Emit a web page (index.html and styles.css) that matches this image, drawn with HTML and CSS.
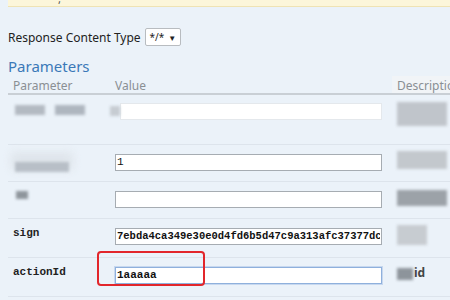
FILE: index.html
```html
<!DOCTYPE html>
<html lang="en">
<head>
  <meta charset="UTF-8">
  <title>Operation</title>
  <link rel="stylesheet" href="styles.css">
</head>
<body>

  <div class="snippet"><span class="tick">,</span></div>

  <div class="content-type">
    <label>Response Content Type</label>
    <span class="select">*/* <span class="arrow">▼</span></span>
  </div>

  <h4 class="params-title">Parameters</h4>

  <table class="params">
    <thead>
      <tr>
        <th class="col-name">Parameter</th>
        <th class="col-value">Value</th>
        <th class="col-desc">Description</th>
      </tr>
    </thead>
    <tbody>
      <tr class="tall">
        <td><span class="blur b1"></span><span class="blur b2"></span></td>
        <td><span class="blur b3"></span><input class="field soft" type="text"></td>
        <td><span class="blur d1"></span></td>
      </tr>
      <tr>
        <td><span class="blur b4"></span></td>
        <td><input class="field" type="text" value="1"></td>
        <td><span class="blur d2"></span></td>
      </tr>
      <tr>
        <td><span class="blur b5"></span></td>
        <td><input class="field" type="text"></td>
        <td><span class="blur d3"></span></td>
      </tr>
      <tr>
        <td class="code">sign</td>
        <td><input class="field mono" type="text" value="7ebda4ca349e30e0d4fd6b5d47c9a313afc37377dc"></td>
        <td><span class="blur d4"></span></td>
      </tr>
      <tr>
        <td class="code">actionId</td>
        <td class="marked">
          <input class="field mono focus" type="text" value="1aaaaa">
          <span class="highlight"></span>
        </td>
        <td class="desc-text"><span class="blur d5"></span>id</td>
      </tr>
    </tbody>
  </table>

</body>
</html>
```

FILE: styles.css
```css
body {
  margin: 0;
  background: #ebf2f9;
  font-family: 'Noto Sans', 'Open Sans', sans-serif;
  font-size: 13px;
  color: #222;
  overflow: hidden;
}

.snippet {
  margin-left: 8px;
  height: 6px;
  background: #fcf6da;
  border-bottom: 1px solid #efe3b4;
  position: relative;
}

.tick {
  position: absolute;
  left: 50px;
  top: -9px;
  font-size: 11px;
  color: #555;
}

.content-type {
  display: flex;
  align-items: center;
  gap: 4px;
  margin: 21px 0 0 8px;
  height: 18px;
  font-size: 12px;
}

.select {
  display: inline-flex;
  align-items: center;
  gap: 4px;
  height: 16px;
  padding: 0 4px;
  background: #fff;
  border: 1px solid #b8bcc0;
  border-radius: 2px;
  font-size: 10px;
}

.arrow {
  font-size: 8px;
}

.params-title {
  margin: 11px 0 0 8px;
  font-size: 15px;
  font-weight: normal;
  color: #3b79b8;
  line-height: 18px;
}

.params {
  border-collapse: collapse;
  margin: 1px 0 0 8px;
  table-layout: fixed;
  width: 470px;
}

.params th {
  text-align: left;
  font-weight: normal;
  font-size: 12px;
  color: #8a8f94;
  height: 14px;
  line-height: 14px;
  padding: 3px 5px 0;
  vertical-align: bottom;
  border-bottom: 2px solid #c9cfd5;
}

.col-name { width: 92px; }
.col-value { width: 272px; }

.params th.col-desc {
  background: #f1f4f7;
  padding-left: 5px;
}

.params td {
  vertical-align: top;
  padding: 6px 5px 0;
  height: 30px;
  border-bottom: 1px solid #dde4ec;
  position: relative;
}

.params tr.tall td {
  height: 44px;
  padding-top: 5px;
}

.params td.code {
  font-family: 'Liberation Mono', monospace;
  font-weight: bold;
  font-size: 11px;
  padding-top: 8px;
}

.field {
  box-sizing: border-box;
  width: 267px;
  height: 17px;
  margin: 0;
  padding: 0 1px;
  background: #fff;
  border: 1px solid #a6acb2;
  font-family: 'Liberation Mono', monospace;
  font-size: 11px;
  color: #111;
}

.field.soft {
  border-color: #e4e8ec;
  margin-left: 5px;
  width: 262px;
}

.field.mono {
  font-weight: bold;
  font-size: 10.5px;
}

.field.focus {
  border: 1px solid #8fb0dc;
  box-shadow: 0 0 0 1px #c7d8ef;
  font-size: 11px;
}

.highlight {
  position: absolute;
  left: -13px;
  top: -7px;
  width: 104px;
  height: 31px;
  border: 2px solid #e2262b;
  border-radius: 4px;
}

.desc-text {
  font-size: 12px;
  font-weight: bold;
  color: #444;
}

.blur {
  display: inline-block;
  filter: blur(1.5px);
  background: #b3bac2;
  vertical-align: top;
}

.b1 { width: 30px; height: 10px; margin: 5px 0 0 2px; }
.b2 { width: 30px; height: 10px; margin: 5px 0 0 10px; background: #aeb6bf; }
.b3 { position: absolute; left: 0; top: 11px; width: 10px; height: 10px; background: #c6ccd2; }
.b4 { width: 54px; height: 10px; margin: 11px 0 0 2px; background: #b8bfc7; box-shadow: 0 -6px 8px 4px #dfe5eb; }
.b5 { width: 12px; height: 8px; margin: 3px 0 0 3px; background: #8e959c; }
.d1 { width: 50px; height: 24px; margin-top: 2px; background: #c0c5cb; }
.d2 { width: 50px; height: 18px; margin-top: 0; background: #c3c8cd; }
.d3 { width: 50px; height: 16px; margin-top: 2px; background: #9ca2a8; }
.d4 { width: 30px; height: 20px; margin-top: 0; background: #c7ccd1; }
.d5 { width: 16px; height: 12px; margin: 4px 1px 0 0; background: #8d949b; }
```
